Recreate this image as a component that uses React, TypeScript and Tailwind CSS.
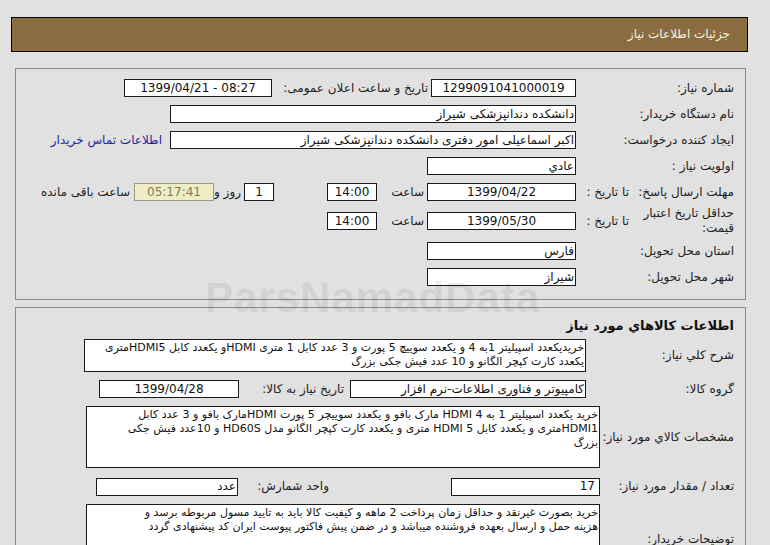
import React from "react";

const box = "h-[18px] border border-[#1a1a1a] bg-white flex items-center text-[#111] overflow-hidden whitespace-nowrap";
const area = "overflow-hidden border border-[#1a1a1a] bg-white pt-[1px] pr-[1px] text-[11px] leading-[14px] text-[#111]";

function Label({ w, children, className = "" }: { w: string; children: React.ReactNode; className?: string }) {
  return <div className={`${w} shrink-0 text-right text-[#222] whitespace-nowrap ${className}`}>{children}</div>;
}

export default function App() {
  return (
    <div
      dir="rtl"
      className="relative min-h-[545px] w-[770px] overflow-hidden bg-[#e1e1e1] pt-[17px] pl-[11px] pr-[22px] text-[12px] leading-[15px]"
      style={{ fontFamily: '"DejaVu Sans", "Noto Sans", sans-serif' }}
    >
      {/* title bar */}
      <div className="flex h-[35px] items-center border border-black bg-[#8b6c41] pr-[17px] text-[12px] text-[#f7f1e3]">
        جزئیات اطلاعات نیاز
      </div>

      {/* first panel */}
      <div className="mt-[16px] ml-[4px] mr-[2px] border border-[#8a8a8a] pt-[10px] pb-[13px] pr-[11px]">
        <div className="flex h-[18px] items-center">
          <Label w="w-[158px]">شماره نیاز:</Label>
          <div className={`${box} w-[145px] justify-center`}>1299091041000019</div>
          <Label w="w-[159px]" className="pr-[3px]">تاریخ و ساعت اعلان عمومی:</Label>
          <div dir="ltr" className={`${box} w-[148px] justify-center`}>1399/04/21 - 08:27</div>
        </div>

        <div className="mt-[8px] flex h-[18px] items-center">
          <Label w="w-[158px]">نام دستگاه خریدار:</Label>
          <div className={`${box} w-[406px] pr-[1px]`}>دانشکده دندانپزشکی شیراز</div>
        </div>

        <div className="mt-[8px] flex h-[18px] items-center">
          <Label w="w-[158px]">ایجاد کننده درخواست:</Label>
          <div className={`${box} w-[406px] pr-[1px]`}>اکبر  اسماعیلی امور دفتری دانشکده دندانپزشکی شیراز</div>
          <a className="mr-[8px] whitespace-nowrap text-[#1f1f9c]">اطلاعات تماس خریدار</a>
        </div>

        <div className="mt-[8px] flex h-[18px] items-center">
          <Label w="w-[158px]">اولویت نیاز :</Label>
          <div className={`${box} w-[149px] pr-[1px]`}>عادي</div>
        </div>

        <div className="mt-[8px] flex h-[18px] items-center">
          <Label w="w-[105px]">مهلت ارسال پاسخ:</Label>
          <Label w="w-[53px]">تا تاریخ :</Label>
          <div className={`${box} w-[149px] justify-center`}>1399/04/22</div>
          <Label w="w-[50px]" className="pr-[3px]">ساعت</Label>
          <div className={`${box} w-[50px] justify-center`}>14:00</div>
          <div className={`${box} mr-[53px] w-[30px] justify-center`}>1</div>
          <Label w="w-[30px]" className="pr-[3px]">روز و</Label>
          <div className="flex h-[18px] w-[80px] items-center justify-center border border-[#9a9a80] bg-[#efecc6] text-[#7d7a55]">05:17:41</div>
          <Label w="w-auto" className="mr-[4px]">ساعت باقی مانده</Label>
        </div>

        <div className="mt-[11px] flex h-[18px] items-center">
          <Label w="w-[105px]">
            <div>حداقل تاریخ اعتبار</div>
            <div>قیمت:</div>
          </Label>
          <Label w="w-[53px]">تا تاریخ :</Label>
          <div className={`${box} w-[149px] justify-center`}>1399/05/30</div>
          <Label w="w-[50px]" className="pr-[3px]">ساعت</Label>
          <div className={`${box} w-[50px] justify-center`}>14:00</div>
        </div>

        <div className="mt-[12px] flex h-[18px] items-center">
          <Label w="w-[158px]">استان محل تحویل:</Label>
          <div className={`${box} w-[149px] pr-[1px]`}>فارس</div>
        </div>

        <div className="mt-[8px] flex h-[18px] items-center">
          <Label w="w-[158px]">شهر محل تحویل:</Label>
          <div className={`${box} w-[149px] pr-[1px]`}>شیراز</div>
        </div>
      </div>

      {/* second panel */}
      <div className="mt-[7px] ml-[4px] mr-[2px] border border-[#8a8a8a] pt-[10px] pb-[20px] pr-[11px]">
        <div className="h-[15px] text-[13px] font-bold text-[#111]">اطلاعات کالاهاي مورد نیاز</div>

        <div className="mt-[6px] flex h-[33px] items-center">
          <Label w="w-[148px]">شرح کلي نیاز:</Label>
          <div className={`${area} h-[33px] w-[502px]`}>
            <div className="whitespace-nowrap">خریدیکعدد اسپیلیتر 1به 4 و یکعدد سوییچ 5 پورت و 3 عدد کابل 1 متری HDMIو یکعدد کابل HDMI5متری</div>
            <div className="whitespace-nowrap">یکعدد کارت کپچر الگانو و 10 عدد فیش جکی بزرگ</div>
          </div>
        </div>

        <div className="mt-[8px] flex h-[18px] items-center">
          <Label w="w-[148px]">گروه کالا:</Label>
          <div className={`${box} w-[236px] pr-[1px]`}>کامپیوتر و فناوری اطلاعات-نرم افزار</div>
          <Label w="w-[111px]" className="pr-[6px]">تاریخ نیاز به کالا:</Label>
          <div className={`${box} w-[140px] justify-center`}>1399/04/28</div>
        </div>

        <div className="mt-[8px] flex h-[62px] items-center">
          <Label w="w-[134px]">مشخصات کالاي مورد نیاز:</Label>
          <div className={`${area} h-[62px] w-[514px]`}>
            <div className="whitespace-nowrap">خرید یکعدد اسپیلیتر 1 به 4 HDMI مارک بافو و یکعدد سوییچر 5 پورت HDMIمارک بافو و 3 عدد کابل</div>
            <div className="whitespace-nowrap">HDMI1متری و یکعدد کابل HDMI 5 متری و یکعدد کارت کپچر الگانو مدل HD60S و 10عدد فیش جکی</div>
            <div className="whitespace-nowrap">بزرگ</div>
          </div>
        </div>

        <div className="mt-[10px] flex h-[17px] items-center">
          <Label w="w-[134px]">تعداد / مقدار مورد نیاز:</Label>
          <div className={`${box} h-[17px] w-[149px] pr-[4px]`}>17</div>
          <Label w="w-[91px]" className="mr-[122px]">واحد شمارش:</Label>
          <div className={`${box} h-[17px] w-[142px] pr-[1px]`}>عدد</div>
        </div>

        <div className="mt-[9px] flex h-[62px] items-center">
          <Label w="w-[134px]" className="pt-[8px]">توضیحات خریدار:</Label>
          <div className={`${area} h-[62px] w-[514px]`}>
            <div className="whitespace-nowrap">خرید بصورت غیرنقد و حداقل زمان پرداخت 2 ماهه و کیفیت کالا باید به تایید مسول مربوطه برسد و</div>
            <div className="whitespace-nowrap">هزینه حمل و ارسال بعهده فروشنده میباشد و در ضمن پیش فاکتور پیوست ایران کد پیشنهادی گردد</div>
          </div>
        </div>
      </div>

      {/* faint watermark over the screenshot */}
      <div
        dir="ltr"
        className="pointer-events-none absolute left-[205px] top-[290px] text-[42px] font-bold tracking-[1px] text-black opacity-[0.06]"
        style={{ fontFamily: '"Liberation Sans", sans-serif' }}
      >
        ParsNamadData
      </div>
    </div>
  );
}
